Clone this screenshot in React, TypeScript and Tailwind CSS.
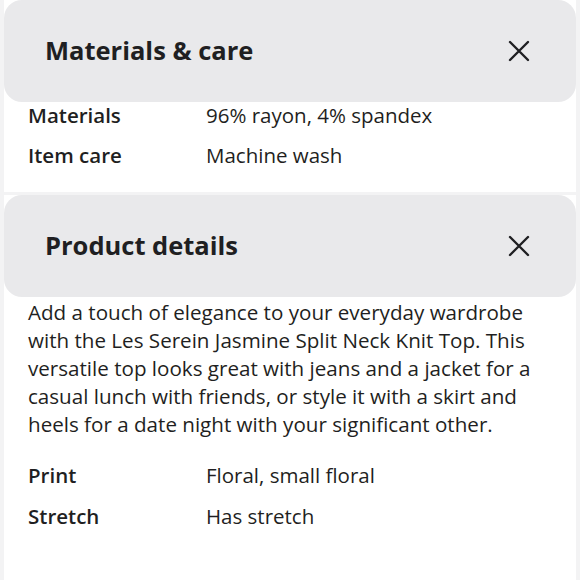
import React from 'react';

const font = { fontFamily: '"Open Sans", "Noto Sans", sans-serif' };

function CloseIcon() {
  return (
    <svg width="22" height="22" viewBox="0 0 22 22" className="shrink-0">
      <path d="M2 2 L20 20 M20 2 L2 20" stroke="#1f1f22" strokeWidth="2.4" strokeLinecap="round" />
    </svg>
  );
}

function Header({ title }: { title: string }) {
  return (
    <div className="h-[102px] rounded-[18px] bg-[#e9e9eb] flex items-center justify-between pl-[41px] pr-[46px]">
      <h2 className="text-[25.5px] font-bold text-[#1f1f22] -mt-[2px]">{title}</h2>
      <CloseIcon />
    </div>
  );
}

function Row({ label, value }: { label: string; value: string }) {
  return (
    <div className="flex h-[28px] items-center text-[20.5px] text-[#1f1f22]">
      <div className="w-[178px] font-semibold">{label}</div>
      <div>{value}</div>
    </div>
  );
}

export default function App() {
  return (
    <div className="min-h-screen bg-[#f3f3f4] px-[4px]" style={font}>
      <section className="bg-white pb-[23px]">
        <Header title="Materials & care" />
        <div className="pl-[24px] flex flex-col gap-[12px] -mt-[1px]">
          <Row label="Materials" value="96% rayon, 4% spandex" />
          <Row label="Item care" value="Machine wash" />
        </div>
      </section>
      <section className="mt-[3px] bg-white pb-[60px]">
        <Header title="Product details" />
        <p className="pl-[24px] text-[20.6px] leading-[28px] text-[#1f1f22] whitespace-nowrap mt-[1px]">
          Add a touch of elegance to your everyday wardrobe
          <br />
          with the Les Serein Jasmine Split Neck Knit Top. This
          <br />
          versatile top looks great with jeans and a jacket for a
          <br />
          casual lunch with friends, or style it with a skirt and
          <br />
          heels for a date night with your significant other.
        </p>
        <div className="pl-[24px] mt-[23px] flex flex-col gap-[13px]">
          <Row label="Print" value="Floral, small floral" />
          <Row label="Stretch" value="Has stretch" />
        </div>
      </section>
    </div>
  );
}
